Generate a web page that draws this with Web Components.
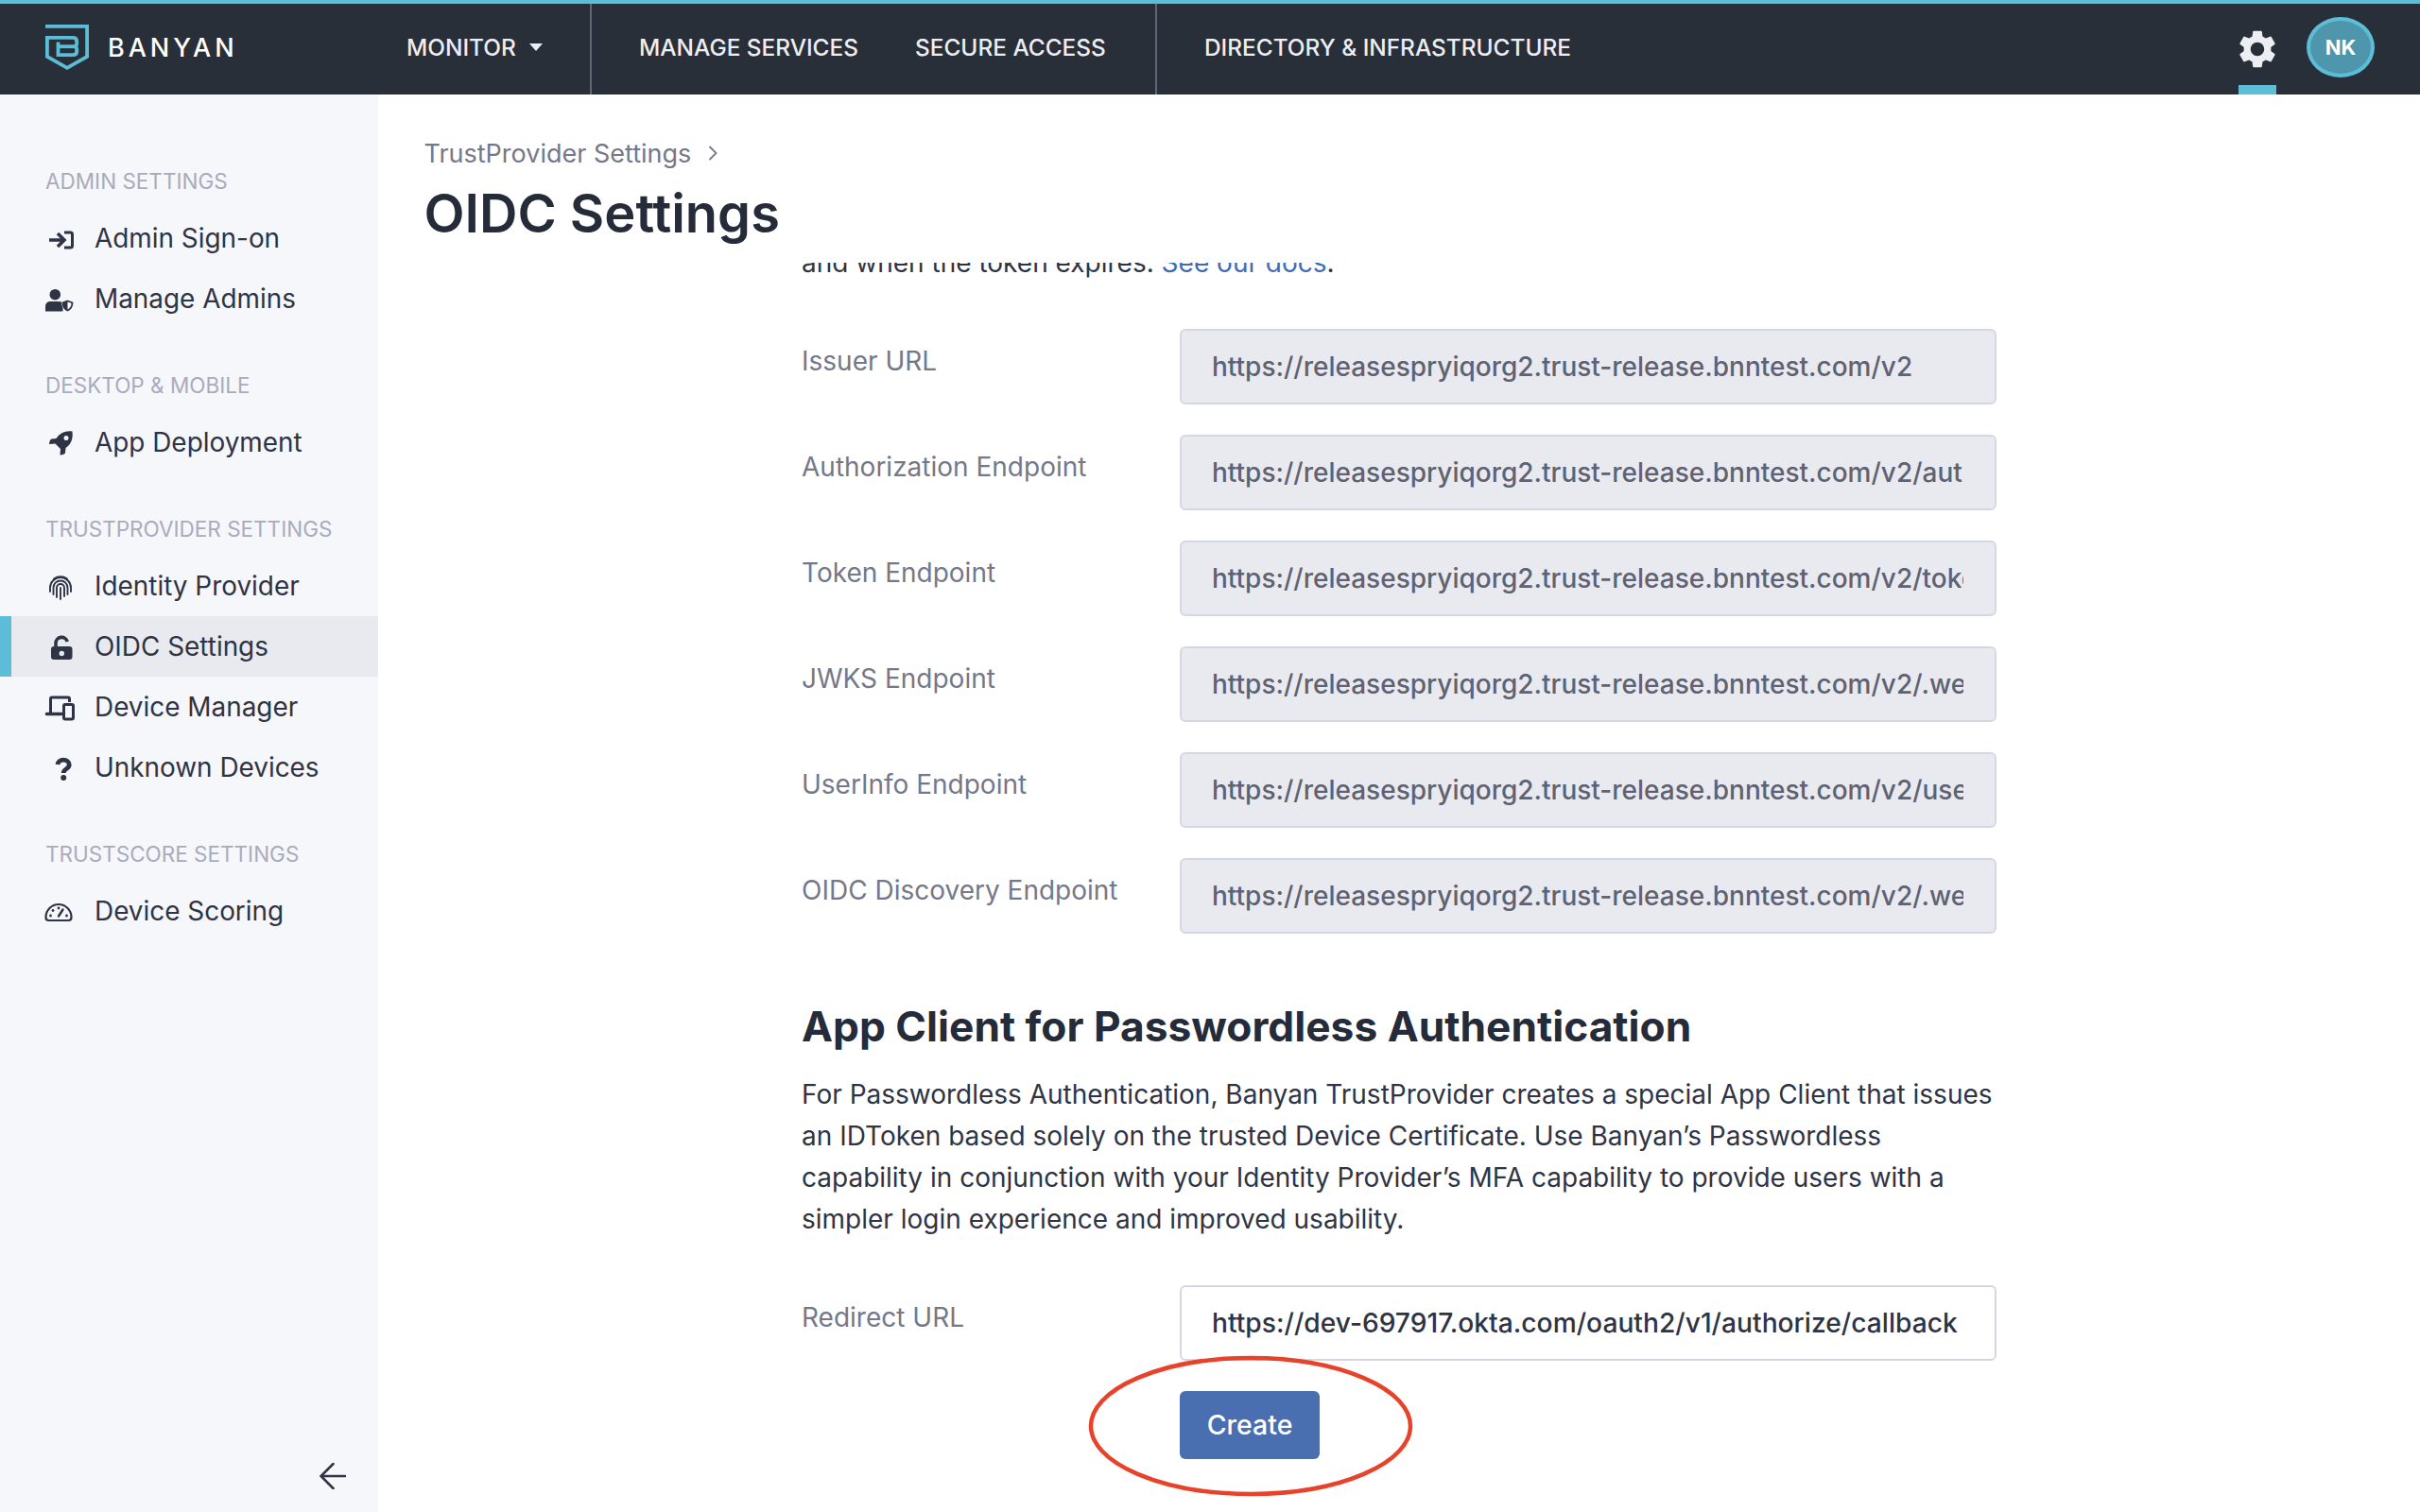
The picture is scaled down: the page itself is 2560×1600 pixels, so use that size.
<!DOCTYPE html>
<html lang="en">
<head>
<meta charset="utf-8">
<title>OIDC Settings</title>
<style>
  html, body { margin: 0; padding: 0; height: 100%; background: #fff; font-family: Inter, "Liberation Sans", sans-serif; overflow: hidden; }
</style>
</head>
<body>
<banyan-app>
  <top-nav slot="top"></top-nav>
  <side-nav slot="side"></side-nav>
  <page-head slot="head" crumb="TrustProvider Settings" heading="OIDC Settings"></page-head>
  <oidc-form slot="body"></oidc-form>
</banyan-app>

<script>
const ICONS = {
  signin: `<path d="M6 20h15M15 13l7 7-7 7" fill="none" stroke="currentColor" stroke-width="3.6"/><path d="M22 12h6.5q2 0 2 2v12q0 2-2 2H22" fill="none" stroke="currentColor" stroke-width="3"/>`,
  admins: `<circle cx="12.3" cy="13.7" r="5.8" fill="currentColor"/><path d="M2 31.5v-5q0-5.5 5.5-5.5h9q3 0 4 1.500v9z" fill="currentColor"/><path d="M25.500 19l6.500 2.500q0 7-6.500 10.500-6.500-3.500-6.500-10.500z" fill="#f6f7fb"/><path d="M25.500 20.500l5 1.900q0 5.300-5 8.100-5-2.800-5-8.100z" fill="#fff" stroke="currentColor" stroke-width="1.800"/><path d="M25.500 20.500v10q-5-2.800-5-8.100z" fill="currentColor"/>`,
  rocket: `<path fill-rule="evenodd" fill="currentColor" d="M30.500 6.500c-7.500-1-13.500 2-17 7.500l-5 .5q-2 .5-2.500 5.500l6.500-.5 5.500 5.500-.5 6.500q5-.5 5.500-2.500l.5-5c5.500-3.500 8-9.500 7-17zM24 11a2.500 2.500 0 1 1 0 5 2.500 2.500 0 0 1 0-5z"/>`,
  finger: `<g fill="none" stroke="currentColor" stroke-width="1.900" stroke-linecap="round"><path d="M7 24v-4a11 11 0 0 1 22 0v4"/><path d="M10.500 27v-7a7.500 7.500 0 0 1 15 0v7"/><path d="M14 30v-10a4 4 0 0 1 8 0v9"/><path d="M18 32V20"/><path d="M11 10.500a12 12 0 0 1 14 0"/></g>`,
  lock: `<path d="M13 20v-5.500a6.200 6.200 0 0 1 12.200-1.500" fill="none" stroke="currentColor" stroke-width="3.600"/><path fill-rule="evenodd" fill="currentColor" d="M11 18h16.500q3 0 3 3v8q0 3-3 3H11q-3 0-3-3v-8q0-3 3-3zM19.300 22.800a2.700 2.700 0 1 0 0 5.400 2.700 2.700 0 0 0 0-5.400z"/>`,
  devices: `<path d="M7.500 24V9.500q0-1.500 1.500-1.500h17q1.500 0 1.500 1.500V13" fill="none" stroke="currentColor" stroke-width="3"/><path d="M3.500 25.500H19" stroke="currentColor" stroke-width="3.600" stroke-linecap="round"/><rect x="21.500" y="15.500" width="10" height="15.500" rx="1.500" fill="none" stroke="currentColor" stroke-width="3"/>`,
  question: `<path d="M15 15c.4-3 3-4.800 6-4.800 3.500 0 6.200 2 6.200 5 0 4.600-6 4.300-6 8.800" fill="none" stroke="currentColor" stroke-width="4.800"/><circle cx="21.200" cy="29" r="3" fill="currentColor"/>`,
  gauge: `<path d="M5.500 28h21q3 0 3-3.500a13.500 13.500 0 0 0-27 0q0 3.500 3 3.500z" fill="none" stroke="currentColor" stroke-width="2.200"/><path d="M16 23.500l4.500-7" stroke="currentColor" stroke-width="2.400" stroke-linecap="round"/><g fill="currentColor"><circle cx="16" cy="15" r="1.400"/><circle cx="10" cy="17.500" r="1.400"/><circle cx="7.500" cy="23" r="1.400"/><circle cx="24.500" cy="23" r="1.400"/></g>`
};

class TopNav extends HTMLElement {
  constructor() {
    super();
    this._root = this.attachShadow({ mode: 'open' });
    this._root.innerHTML = `
    <style>
      :host { display: flex; align-items: stretch; height: 96px; box-sizing: content-box; background: #282f39; border-top: 4px solid #5bbdd6; color: #eceef4; font: 500 24.4px Inter, "Liberation Sans", sans-serif; white-space: nowrap; }
      .brand { display: flex; align-items: center; width: 430px; padding-left: 48px; box-sizing: border-box; gap: 20px; flex: none; padding-bottom: 4px; }
      .brand svg { width: 46px; height: 48px; display: block; }
      .brand span { color: #fff; font-size: 27px; letter-spacing: 4px; font-weight: 500; }
      .group { display: flex; align-items: center; gap: 60px; padding-bottom: 5px; }
      .monitor { width: 194px; flex: none; gap: 14px; }
      .caret { width: 0; height: 0; border: 7.500px solid transparent; border-top: 8px solid #eceef4; border-bottom: 0; }
      .sep { width: 2px; background: #5f6675; flex: none; }
      .mid { padding-left: 50px; width: 596px; box-sizing: border-box; flex: none; }
      .dir { padding-left: 50px; }
      .right { margin-left: auto; display: flex; align-items: center; padding-right: 48px; }
      .gear { position: relative; width: 40px; height: 96px; display: flex; align-items: center; justify-content: center; margin-right: 32px; }
      .gear svg { width: 48px; height: 48px; flex: none; }
      .gear::after { content: ""; position: absolute; left: 0; right: 0; bottom: 0; height: 10px; background: #5bbdd6; }
      .avatar { width: 72px; height: 64px; box-sizing: border-box; border-radius: 50%; border: 4px solid #5bbdd6; background: #4d96ab; color: #fff; font-size: 22px; font-weight: 700; display: flex; align-items: center; justify-content: center; margin-bottom: 4px; }
    </style>
    <div class="brand">
      <svg viewBox="48 28 46 48" fill="none" stroke="#5bbdd6" stroke-width="3.800">
        <path d="M48 29.900H92.100V61.800L71 73.800 49.900 61.800V41.900H77q4.200 0 4.200 4v2q0 3.300-3.500 3.300 3.500 0 3.500 3.300v1.700q0 4-4.200 4H61.500V46.500"/>
        <path d="M61.500 51.200H78"/>
      </svg>
      <span>BANYAN</span>
    </div>
    <div class="group monitor"><span>MONITOR</span><i class="caret"></i></div>
    <div class="sep"></div>
    <div class="group mid"><span>MANAGE SERVICES</span><span>SECURE ACCESS</span></div>
    <div class="sep"></div>
    <div class="group dir"><span>DIRECTORY &amp; INFRASTRUCTURE</span></div>
    <div class="right">
      <div class="gear"><svg viewBox="0 0 24 24"><path fill="#eceef4" d="M19.140 12.940c.04-.3.06-.61.06-.94 0-.32-.02-.64-.07-.94l2.030-1.580c.18-.14.23-.41.12-.61l-1.920-3.320c-.12-.22-.37-.29-.59-.22l-2.390.96c-.5-.38-1.030-.7-1.620-.94l-.36-2.540c-.04-.24-.24-.41-.48-.41h-3.840c-.24 0-.43.17-.47.41l-.36 2.540c-.59.24-1.130.57-1.620.94l-2.390-.96c-.22-.08-.47 0-.59.22L2.740 8.870c-.12.21-.08.47.12.61l2.030 1.580c-.05.3-.09.63-.09.94s.02.64.07.94l-2.030 1.580c-.18.14-.23.41-.12.61l1.920 3.320c.12.22.37.29.59.22l2.390-.96c.5.38 1.030.7 1.620.94l.36 2.540c.05.24.24.41.48.41h3.840c.24 0 .44-.17.47-.41l.36-2.540c.59-.24 1.130-.56 1.620-.94l2.390.96c.22.08.47 0 .59-.22l1.920-3.320c.12-.22.07-.47-.12-.61l-2.010-1.580zM12 15.600c-1.980 0-3.600-1.620-3.600-3.600s1.620-3.600 3.600-3.600 3.600 1.620 3.600 3.600-1.620 3.600-3.600 3.600z"/></svg></div>
      <div class="avatar">NK</div>
    </div>`;
  }
}
customElements.define('top-nav', TopNav);

class NavItem extends HTMLElement {
  constructor() {
    super();
    this._root = this.attachShadow({ mode: 'open' });
    const icon = ICONS[this.getAttribute('icon')] || '';
    this._root.innerHTML = `
    <style>
      :host { display: flex; align-items: center; height: 64px; padding-left: 46px; gap: 18px; color: #2f3445; font-size: 27.900px; }
      :host([active]) { background: #e9eaef; box-shadow: inset 12px 0 0 #5bbdd6; }
      svg { width: 36px; height: 36px; flex: none; display: block; }
    </style>
    <svg viewBox="0 0 36 36">${icon}</svg>
    <slot></slot>`;
  }
}
customElements.define('nav-item', NavItem);

class NavSection extends HTMLElement {
  constructor() {
    super();
    this._root = this.attachShadow({ mode: 'open' });
    this._root.innerHTML = `
    <style>
      :host { display: block; margin-bottom: 40px; }
      h4 { margin: 0 0 8px; padding-left: 48px; height: 40px; line-height: 40px; font-size: 22.500px; font-weight: 400; color: #a9abbc; }
    </style>
    <h4>${this.getAttribute('label')}</h4>
    <slot></slot>`;
  }
}
customElements.define('nav-section', NavSection);

class SideNav extends HTMLElement {
  constructor() {
    super();
    this._root = this.attachShadow({ mode: 'open' });
    this._root.innerHTML = `
    <style>
      :host { display: flex; flex-direction: column; width: 400px; height: 100%; box-sizing: border-box; padding-top: 72px; background: #f6f7fb; }
      .collapse { margin-top: auto; padding: 0 34px 24px 0; align-self: flex-end; }
      .collapse svg { width: 28px; height: 28px; display: block; }
    </style>
    <nav-section label="ADMIN SETTINGS">
      <nav-item icon="signin">Admin Sign-on</nav-item>
      <nav-item icon="admins">Manage Admins</nav-item>
    </nav-section>
    <nav-section label="DESKTOP &amp; MOBILE">
      <nav-item icon="rocket">App Deployment</nav-item>
    </nav-section>
    <nav-section label="TRUSTPROVIDER SETTINGS">
      <nav-item icon="finger">Identity Provider</nav-item>
      <nav-item icon="lock" active>OIDC Settings</nav-item>
      <nav-item icon="devices">Device Manager</nav-item>
      <nav-item icon="question">Unknown Devices</nav-item>
    </nav-section>
    <nav-section label="TRUSTSCORE SETTINGS">
      <nav-item icon="gauge">Device Scoring</nav-item>
    </nav-section>
    <div class="collapse"><svg viewBox="0 0 28 28" fill="none" stroke="#2f3445" stroke-width="2.600" stroke-linecap="round"><path d="M27 14H2M14.500 1L1.500 14l13 13"/></svg></div>`;
  }
}
customElements.define('side-nav', SideNav);

class PageHead extends HTMLElement {
  constructor() {
    super();
    this._root = this.attachShadow({ mode: 'open' });
    this._root.innerHTML = `
    <style>
      :host { display: block; height: 178px; box-sizing: border-box; padding: 42px 0 0 48.500px; background: #fff; }
      .crumb { display: flex; align-items: center; gap: 18px; height: 40px; font-size: 27px; color: #747889; }
      .crumb svg { width: 10px; height: 16px; }
      h1 { margin: 6px 0 0; font-size: 56px; line-height: 76px; font-weight: 600; color: #262b3a; }
    </style>
    <div class="crumb"><span>${this.getAttribute('crumb')}</span><svg viewBox="0 0 10 16" fill="none" stroke="#747889" stroke-width="1.800"><path d="M1.500 1l7 7-7 7"/></svg></div>
    <h1>${this.getAttribute('heading')}</h1>`;
  }
}
customElements.define('page-head', PageHead);

class FieldRow extends HTMLElement {
  constructor() {
    super();
    this._root = this.attachShadow({ mode: 'open' });
    const editable = this.hasAttribute('editable');
    this._root.innerHTML = `
    <style>
      :host { display: grid; grid-template-columns: 400px 864px; }
      label { font-size: 28px; line-height: 40px; padding-top: 14px; color: #747889; }
      .box { height: 80px; box-sizing: border-box; border: 2px solid #d5d8e3; border-radius: 6px; padding: 0 33px 0 32px; display: flex; align-items: center; background: ${editable ? '#fff' : '#e9eaf0'}; color: ${editable ? '#2f3445' : '#5e6272'}; font-size: ${editable ? '28.200px' : '28px'}; font-weight: 500; }
      .val { overflow: hidden; white-space: nowrap; flex: 1; }
    </style>
    <label>${this.getAttribute('label')}</label>
    <div class="box"><div class="val">${this.getAttribute('value')}</div></div>`;
  }
}
customElements.define('field-row', FieldRow);

class CreateButton extends HTMLElement {
  constructor() {
    super();
    this._root = this.attachShadow({ mode: 'open' });
    this._root.innerHTML = `
    <style>
      :host { display: inline-flex; position: relative; }
      .btn { width: 148px; height: 72px; border-radius: 6px; background: #4a6fb1; color: #fff; font-size: 28.500px; font-weight: 500; display: flex; align-items: center; justify-content: center; padding-bottom: 1px; box-sizing: border-box; }
      svg { position: absolute; left: -96px; top: -37px; width: 342px; height: 148px; overflow: visible; }
    </style>
    <div class="btn"><slot></slot></div>
    <svg viewBox="0 0 342 148" fill="none"><ellipse cx="171" cy="74" rx="169" ry="72" stroke="#e8432a" stroke-width="4.500"/></svg>`;
  }
}
customElements.define('create-button', CreateButton);

class OidcForm extends HTMLElement {
  constructor() {
    super();
    this._root = this.attachShadow({ mode: 'open' });
    const base = 'https://releasespryiqorg2.trust-release.bnntest.com/v2';
    const rows = [
      ['Issuer URL', base],
      ['Authorization Endpoint', base + '/authorize'],
      ['Token Endpoint', base + '/token'],
      ['JWKS Endpoint', base + '/.well-known/jwks.json'],
      ['UserInfo Endpoint', base + '/userinfo'],
      ['OIDC Discovery Endpoint', base + '/.well-known/openid-configuration']
    ];
    this._root.innerHTML = `
    <style>
      :host { display: block; padding-left: 448px; color: #2f3445; }
      .intro { margin: -22px 0 48px; font-size: 28px; line-height: 44px; }
      a { color: #3f6cb5; text-decoration: none; }
      .rows { display: flex; flex-direction: column; gap: 32px; width: 1264px; }
      h2 { margin: 68px 0 20px; font-size: 44.250px; line-height: 60px; font-weight: 700; color: #262b3a; }
      p { margin: 0 0 48px; width: 1270px; font-size: 28px; line-height: 44px; }
      .action { margin: 32px 0 0 400px; }
    </style>
    <div class="intro">and when the token expires. <a href="#">See our docs</a>.</div>
    <div class="rows">
      ${rows.map(r => `<field-row label="${r[0]}" value="${r[1]}"></field-row>`).join('')}
    </div>
    <h2>App Client for Passwordless Authentication</h2>
    <p>For Passwordless Authentication, Banyan TrustProvider creates a special App Client that issues an IDToken based solely on the trusted Device Certificate. Use Banyan’s Passwordless capability in conjunction with your Identity Provider’s MFA capability to provide users with a simpler login experience and improved usability.</p>
    <field-row label="Redirect URL" value="https://dev-697917.okta.com/oauth2/v1/authorize/callback" editable></field-row>
    <div class="action"><create-button>Create</create-button></div>`;
  }
}
customElements.define('oidc-form', OidcForm);

class BanyanApp extends HTMLElement {
  constructor() {
    super();
    this._root = this.attachShadow({ mode: 'open' });
    this._root.innerHTML = `
    <style>
      :host { display: grid; grid-template-columns: 400px 1fr; grid-template-rows: 100px 1fr; height: 100vh; font-family: Inter, "Liberation Sans", sans-serif; }
      .top { grid-column: 1 / 3; }
      .side { min-height: 0; }
      .main { display: flex; flex-direction: column; min-height: 0; overflow: hidden; }
      .scroll { flex: 1; min-height: 0; overflow: hidden; }
    </style>
    <div class="top"><slot name="top"></slot></div>
    <div class="side"><slot name="side"></slot></div>
    <div class="main">
      <slot name="head"></slot>
      <div class="scroll"><slot name="body"></slot></div>
    </div>`;
  }
}
customElements.define('banyan-app', BanyanApp);
</script>
</body>
</html>
